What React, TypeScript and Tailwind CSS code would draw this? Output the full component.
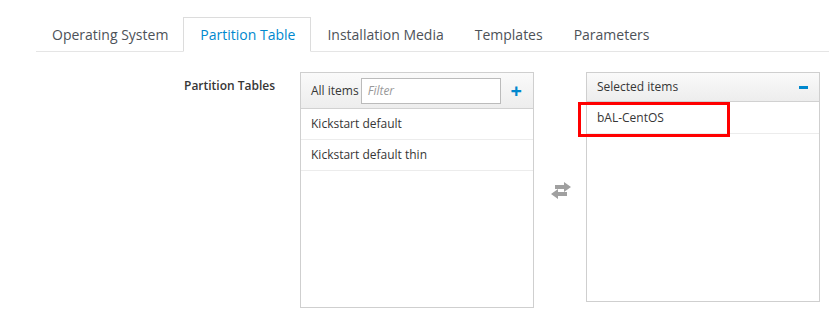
import React from 'react';

const tabs = ['Operating System', 'Partition Table', 'Installation Media', 'Templates', 'Parameters'];

function SwapIcon() {
  return (
    <svg width="22" height="17" viewBox="0 0 22 17" fill="#a0a0a0">
      <path d="M5 3h9V0l7 5-7 5V7H5z" />
      <path d="M17 10H8V7l-7 5 7 5v-3h9z" />
    </svg>
  );
}

export default function App() {
  return (
    <div className="w-[829px] h-[332px] bg-white text-[#363636]" style={{ fontFamily: '"Open Sans", sans-serif' }}>
      {/* tabs */}
      <div className="pt-[17px] pl-[36px]">
        <ul className="flex border-b border-[#e5e5e5] text-[14px]">
          {tabs.map((t, i) =>
            i === 1 ? (
              <li
                key={t}
                className="h-[35px] -mb-px pl-4 pr-[15px] flex items-center border border-[#dcdcdc] border-b-white bg-white text-[#0088ce]"
              >
                {t}
              </li>
            ) : (
              <li key={t} className="h-[34px] pl-4 pr-[15px] flex items-center text-[#4d5258]">
                {t}
              </li>
            )
          )}
        </ul>
      </div>

      {/* body */}
      <div className="flex pt-[20px] pl-[184px] text-[12px]">
        <div className="w-[116px] pt-[5px] font-semibold text-[#363636]">Partition Tables</div>

        {/* all items */}
        <div className="w-[234px] h-[236px] border border-[#cfcfcf]">
          <div className="h-[36px] flex items-center pl-[10px] pr-[10px] bg-gradient-to-b from-[#fafafa] to-[#ededed] border-b border-[#d1d1d1]">
            <span className="mr-[2px]">All items</span>
            <div className="w-[140px] h-[26px] border border-[#bbbbbb] bg-white flex items-center px-[6px] italic text-[#999999]">
              Filter
            </div>
            <span className="ml-auto mr-[1px] text-[#0088ce] text-[20px] font-bold leading-none">+</span>
          </div>
          <div className="h-[31px] flex items-center pl-[10px] border-b border-[#ececec]">Kickstart default</div>
          <div className="h-[31px] flex items-center pl-[10px] border-b border-[#ececec]">Kickstart default thin</div>
        </div>

        <div className="w-[52px] flex items-center justify-center pt-[0px] pl-[1px]">
          <SwapIcon />
        </div>

        {/* selected items */}
        <div className="relative w-[234px] h-[230px] border border-[#cfcfcf]">
          <div className="h-[29px] flex items-center pl-[10px] pr-[11px] bg-gradient-to-b from-[#fafafa] to-[#ededed] border-b border-[#d1d1d1]">
            <span>Selected items</span>
            <span className="ml-auto w-[9px] h-[3px] bg-[#0088ce]" />
          </div>
          <div className="h-[32px] flex items-center pl-[10px] border-b border-[#ececec]">bAL-CentOS</div>
          <div className="absolute left-[-9px] top-[29px] w-[152px] h-[35px] border-[3px] border-[#ff0000]" />
        </div>
      </div>
    </div>
  );
}
